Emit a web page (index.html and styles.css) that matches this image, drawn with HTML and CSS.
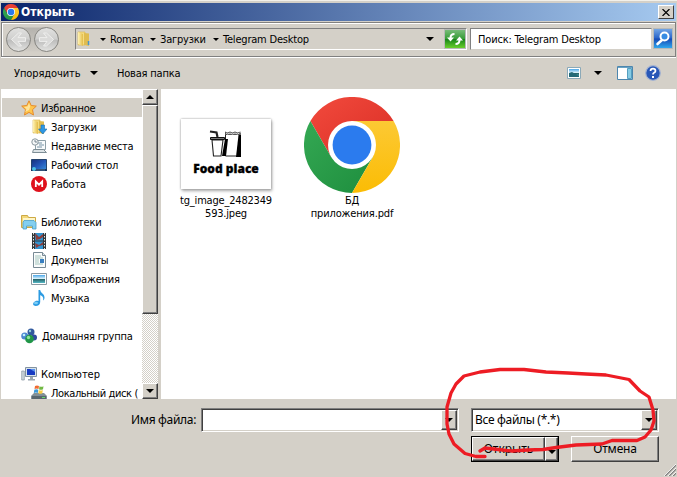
FILE: index.html
```
<!DOCTYPE html>
<html lang="ru">
<head>
<meta charset="utf-8">
<title>Открыть</title>
<link rel="stylesheet" href="styles.css">
</head>
<body>
<svg class="defs" width="0" height="0" aria-hidden="true">
  <defs>
    <linearGradient id="cr" x1="0" y1="0" x2="1" y2="1"><stop offset="0" stop-color="#f24a3d"/><stop offset="1" stop-color="#d92e25"/></linearGradient>
    <linearGradient id="cg" x1="0" y1="0" x2="1" y2="1"><stop offset="0" stop-color="#34a853"/><stop offset="1" stop-color="#1e8e3e"/></linearGradient>
    <linearGradient id="cy" x1="0" y1="0" x2="0" y2="1"><stop offset="0" stop-color="#fcc934"/><stop offset="1" stop-color="#fbbc04"/></linearGradient>
    <linearGradient id="fold" x1="0" x2="1"><stop offset="0" stop-color="#fff3b4"/><stop offset="1" stop-color="#e3bc48"/></linearGradient>
    <linearGradient id="nav" x1="0" y1="0" x2="0" y2="1"><stop offset="0" stop-color="#e2e2e0"/><stop offset=".48" stop-color="#cfcfce"/><stop offset=".52" stop-color="#bcbcbb"/><stop offset="1" stop-color="#e4e4e2"/></linearGradient>
    <linearGradient id="pill" x1="0" y1="0" x2="0" y2="1"><stop offset="0" stop-color="#b4b2ad"/><stop offset="1" stop-color="#d0ccc5"/></linearGradient>
    <linearGradient id="scr" x1="0" y1="0" x2="1" y2="1"><stop offset="0" stop-color="#172e78"/><stop offset=".5" stop-color="#2355b8"/><stop offset="1" stop-color="#3b94dd"/></linearGradient>
    <linearGradient id="sky" x1="0" y1="0" x2="0" y2="1"><stop offset="0" stop-color="#4aa6e8"/><stop offset=".45" stop-color="#d9f1fb"/><stop offset=".5" stop-color="#245c60"/><stop offset="1" stop-color="#56bac8"/></linearGradient>
    <symbol id="chrome" viewBox="0 0 96 96">
      <path fill="url(#cr)" d="M6.4 24A48 48 0 0 1 89.6 24H48L27.2 60Z"/>
      <path fill="url(#cg)" d="M6.4 24A48 48 0 0 0 48 96L68.8 60H27.2Z"/>
      <path fill="url(#cy)" d="M89.6 24A48 48 0 0 1 48 96L68.8 60L48 24Z"/>
      <circle cx="48" cy="48" r="24" fill="#fff"/><circle cx="48" cy="48" r="19.4" fill="#2b7bee"/>
    </symbol>
    <symbol id="folder" viewBox="0 0 16 16">
      <path d="M2 1h7v13H2z" fill="#f5dc82" stroke="#d6b14a" stroke-width=".6"/><path d="M8 2l5 .5V15l-5-1z" fill="#e0bc50"/><path d="M2 1l5 2v12l-5-2z" fill="url(#fold)"/>
    </symbol>
  </defs>
</svg>
<main class="dialog">
  <header class="titlebar">
    <svg class="i16" viewBox="0 0 16 16"><use href="#chrome"/></svg>
    <h1>Открыть</h1>
    <button class="close" aria-label="Закрыть"><svg width="8" height="7" viewBox="0 0 8 7"><path d="M.5 0L7.500 7M7.500 0L.5 7" stroke="#000" stroke-width="1.200"/></svg></button>
  </header>

  <section class="navbar">
    <svg class="history" width="56" height="28" viewBox="0 0 56 28">
      <path d="M12.500 1.500H40.500V25.500H12.500Z" fill="url(#pill)"/>
      <g fill="url(#nav)" stroke="#85847f"><circle cx="12.500" cy="13.500" r="12"/><circle cx="40.500" cy="13.500" r="12"/></g>
      <path d="M19.500 11.600H12L15.500 7H12.500L5.500 13.500L12.500 20H15.500L12 15.400H19.500ZM33.500 11.600H41L37.500 7H40.500L47.500 13.500L40.500 20H37.500L41 15.400H33.500Z" fill="#dadad9" stroke="#f1f1ef" stroke-width=".9"/>
    </svg>
    <div class="address">
      <svg class="i16 place" viewBox="0 0 16 16"><use href="#folder"/><path d="M12.500 10v4" stroke="#4995c8" stroke-width="1.500"/></svg>
      <i class="tri"></i><span class="c1">Roman</span><i class="tri"></i><span class="c2">Загрузки</span><i class="tri"></i><span class="c3">Telegram Desktop</span>
      <i class="tri last"></i>
      <button class="refresh" aria-label="Обновить"><svg width="20" height="18" viewBox="0 0 20 18"><path d="M9.500 4Q5.500 4 5.500 8M10.500 14Q14.500 14 14.500 10" stroke="#fff" stroke-width="2" fill="none"/><path d="M2 7.500H9L5.500 11.500ZM11 10.500H18L14.500 6.500Z" fill="#fff"/></svg></button>
    </div>
    <div class="search"><span>Поиск: Telegram Desktop</span></div>
    <button class="find" aria-label="Найти"><svg width="18" height="19" viewBox="0 0 18 19"><path d="M8 11L3.500 15" stroke="#fff" stroke-width="2.600" stroke-linecap="round"/><circle cx="10.500" cy="7.500" r="4" fill="#388ce3" stroke="#fff" stroke-width="2"/></svg></button>
  </section>

  <nav class="toolbar">
    <span class="organize">Упорядочить</span><i class="tri big"></i><span class="newdir">Новая папка</span>
    <svg class="view" width="14" height="12" viewBox="0 0 14 12"><path d="M.5.5h13v11H.5z" fill="#fff" stroke="#8ba9b8"/><path d="M2 2h10v8H2z" fill="url(#sky)"/><path d="M2 6l3-1 7 4v1H2z" fill="#246a78"/></svg>
    <i class="tri big views"></i>
    <svg class="pane" width="16" height="14" viewBox="0 0 16 14"><path d="M.5.5h15v13H.5z" fill="#fff" stroke="#4c86ae"/><path d="M1 1.500h14" stroke="#6aa3c4"/><path d="M10.500 2.500h4v10h-4z" fill="#86cbe4" stroke="#559fc0"/></svg>
    <svg class="help" width="16" height="16" viewBox="0 0 16 16"><circle cx="8" cy="8" r="7.300" fill="#2857b7" stroke="#a4b3d2" stroke-width="1.200"/><path d="M5.500 6Q5.500 3.600 8 3.600T10.500 6Q10.500 7 9 7.800Q8 8.300 8 9.600" fill="none" stroke="#fff" stroke-width="1.700"/><path d="M7 11h2v2H7z" fill="#fff"/></svg>
  </nav>

  <section class="content">
    <ul class="tree">
      <li class="root selected"><svg class="i16" viewBox="0 0 16 16"><path d="M8 .8L10.200 5.500L15.300 6.100L11.500 9.700L12.500 15L8 12.400L3.500 15L4.500 9.700L.7 6.100L5.800 5.500Z" fill="#ffc64b" stroke="#e58a2a"/><path d="M8 3L9.200 6.600L8 10L4 12L5.500 9L3 7L6.500 6.500Z" fill="#ffe49a"/></svg><span>Избранное</span></li>
      <li><svg class="i16" viewBox="0 0 16 16"><use href="#folder"/><path d="M10 6h3.500v4H16l-4.200 5L7.500 10H10z" fill="#2d98e5" stroke="#1c6cab" stroke-width=".6"/></svg><span>Загрузки</span></li>
      <li><svg class="i16" viewBox="0 0 16 16"><path d="M4.500 2.500h10v9h-10z" fill="#f8fbfc" stroke="#8fa0a8"/><path d="M6 5h5M8 7h5M6 9h5" stroke="#7792a5"/><path d="M2.500 11.500h10l3 3h-14z" fill="#dce3e6" stroke="#7e8e96"/><circle cx="4" cy="4" r="3.200" fill="#f4f7f8" stroke="#8b989f"/><path d="M4 2v2h2" fill="none" stroke="#596b76" stroke-width=".8"/></svg><span class="recent">Недавние места</span></li>
      <li><svg class="i16" viewBox="0 0 16 16"><path d="M.5 2.500h15v11H.5z" fill="url(#scr)" stroke="#26446d"/><path d="M0 12h16v2H0z" fill="#16345d"/><circle cx="3" cy="12" r="2" fill="#4bc0e4"/><path d="M5 13h9" stroke="#668cae" stroke-width=".7"/></svg><span>Рабочий стол</span></li>
      <li><svg class="i16" viewBox="0 0 16 16"><circle cx="8" cy="8" r="8" fill="#df111c"/><path d="M4.800 11V5.500L8 8.700L11.200 5.500V11" stroke="#fff" stroke-width="1.800" fill="none"/></svg><span>Работа</span></li>
      <li class="root gap"><svg class="i16" viewBox="0 0 16 16"><path d="M.5 1.500h6l1 2h7v10H.5z" fill="#f4d878" stroke="#cda944"/><path d="M2 4h12v3H2z" fill="#fff6c8"/><path d="M3 6.500h10l2 2V15h-3.500v-3h-6v3H2V8.500z" fill="#83cff0" stroke="#4b9fc9" stroke-width=".8"/></svg><span>Библиотеки</span></li>
      <li><svg class="i16" viewBox="0 0 16 16"><path d="M1 0h14v16H1z" fill="#323638"/><path d="M4 0h8v7.500H4zM4 8.500h8V16H4z" fill="#3194d1"/><path d="M4 0l4 4 4-3v3L9 6 5 7zM4 10l4 2 4-3v3l-4 1-3 2z" fill="#8c3e3c"/><path d="M2.500 0v16M13.500 0v16" stroke="#e3e7e9" stroke-dasharray="1.500 1.500"/></svg><span>Видео</span></li>
      <li><svg class="i16" viewBox="0 0 16 16"><path d="M2.500.5h9l3 3v12h-12z" fill="#fafcfc" stroke="#788a94"/><path d="M11.500.5v3h3" fill="#dce6eb" stroke="#788a94"/><path d="M4 4h6M4 6h8M4 8h4M4 10h4M4 12h8" stroke="#a3c4bc"/><path d="M9 7h4v4H9z" fill="#397fc1"/></svg><span>Документы</span></li>
      <li><svg class="i16" viewBox="0 0 16 16"><path d="M.5 2.500h15v11H.5z" fill="#fff" stroke="#8c9aa2"/><path d="M2 4h12v8H2z" fill="url(#sky)"/></svg><span>Изображения</span></li>
      <li><svg class="i16" viewBox="0 0 16 16"><path d="M7.500 0h1.700c.3 3 4.300 3.500 4.300 7.500 0 1.500-.7 2.500-1.500 3 1-3.500-1-4.500-2.800-5.500v7c0 2.500-2 4-4.500 4S1.500 14 2.800 12.300 6 10.300 7.500 11z" fill="#2c9be2"/><ellipse cx="5" cy="13" rx="2" ry="1.300" fill="#79cdf8"/></svg><span>Музыка</span></li>
      <li class="root gap home"><svg class="i16" viewBox="0 0 16 16"><circle cx="10" cy="4" r="3.500" fill="#31599e"/><circle cx="3.700" cy="8" r="3.500" fill="#4a86cf"/><circle cx="13" cy="9.500" r="3" fill="#304b9e"/><circle cx="8.500" cy="11" r="4.300" fill="#219648"/><circle cx="9" cy="3" r="1.200" fill="#92ced9"/><circle cx="3" cy="7" r="1.300" fill="#c1f1fa"/><circle cx="7.500" cy="9.500" r="1.700" fill="#8be598"/></svg><span>Домашняя группа</span></li>
      <li class="root gap"><svg class="i16" viewBox="0 0 16 16"><path d="M4.500 1.500h11v9h-11z" fill="#d6e2ec" stroke="#8292a0"/><path d="M6 3h8v6H6z" fill="#173bc2"/><path d="M9 3h5v3z" fill="#5892ed"/><path d="M9 11h3v2h2v1.500H7V13h2z" fill="#9ba8b2"/><path d="M.7 5h2.600v9H.7z" fill="#cbd5db" stroke="#8896a0" stroke-width=".7"/></svg><span class="computer">Компьютер</span></li>
      <li><svg class="i16" viewBox="0 0 16 16"><path d="M3 8h10l3 3v4H0v-4z" fill="#829097"/><path d="M1 11h14v3H1z" fill="#59676e"/><path d="M11 12h3v1h-3z" fill="#65dc68"/><path d="M4 1q2-1 4 0L7.500 4q-2-1-4 0z" fill="#f16a31"/><path d="M8.500 1.300q2 1 4 0L12 4.300q-2 1-4 0z" fill="#72b943"/><path d="M3.300 4.700q2-1 4 0L6.800 8q-2-1-4 0z" fill="#3b9ad9"/><path d="M7.800 5q2 1 4 0l-.5 3.300q-2 1-4 0z" fill="#f8cb43"/></svg><span class="disk">Локальный диск (</span></li>
    </ul>
    <div class="scroll"><b class="bevel arrow"><i class="tri up"></i></b><b class="bevel thumb"></b><b class="track"></b><b class="bevel arrow"><i class="tri down"></i></b></div>
    <div class="files">
      <figure class="file one">
        <div class="thumbnail">
          <svg width="36" height="28" viewBox="0 0 36 28"><path d="M17.500 3V26H32V3" fill="#fff" stroke="#222" stroke-width="1"/><path d="M17 3V1.500l2.500 1 2.500-1 2.500 1 2.500-1 2.500 1 3-1V5H17Z" fill="#555"/><path d="M18 3l1.500 1 2.500-1 2.500 1 2.500-1 2.500 1 2-1" fill="none" stroke="#fff" stroke-width=".8"/><path d="M30.500 5H33V27H28Z" fill="#000"/><path d="M17 9H20L18 26H14Z" fill="#000"/><path d="M4 10L5.500 26H13L15 10Z" fill="#fff" stroke="#222" stroke-width="1.100"/><path d="M2.500 7.500h14v2h-14z" fill="#777" stroke="#111"/><path d="M9.500 7L8.500 2.500L2 1.500" fill="none" stroke="#222" stroke-width="2.200"/></svg>
          <strong>Food place</strong>
        </div>
        <figcaption><span class="n1">tg_image_2482349</span><span class="n2">593.jpeg</span></figcaption>
      </figure>
      <figure class="file two">
        <svg class="biglogo" viewBox="0 0 96 96"><use href="#chrome"/></svg>
        <figcaption><span>БД</span><span class="n3">приложения.pdf</span></figcaption>
      </figure>
    </div>
  </section>

  <footer class="footer">
    <div class="line">
      <label>Имя файла:</label>
      <div class="combo name"><span></span><b class="bevel drop"><i class="tri big"></i></b></div>
      <div class="combo type"><span>Все файлы (*.*)</span><b class="bevel drop"><i class="tri big"></i></b></div>
    </div>
    <div class="line actions">
      <div class="open"><button class="bevel main">Открыть</button><button class="bevel split" aria-label="Ещё"><i class="tri big"></i></button></div>
      <button class="bevel cancel">Отмена</button>
    </div>
  </footer>
  <svg class="grip" width="12" height="12" viewBox="0 0 12 12"><path d="M1 12L12 1M5 12L12 5M9 12L12 9" stroke="#808080" stroke-width="1.500"/><path d="M0 12L12 0M4 12L12 4M8 12L12 8" stroke="#fff" stroke-width=".8"/></svg>
  <svg class="marker" width="677" height="477" viewBox="0 0 677 477"><path d="M485 456.500H476L465 453.500L454 444L449 434L447 424V407L451 393L456 384L464 376L480 372L500 369.500H524L546 372L568 373L586 374L606 375L629 379.500L640 391L649 397L653 410L654 421L651 430L645 437L637 440.500H612L602 444L576 445L556 447.500L543 449.500L528 450L512 451L498 449.500L485 448L480 451" fill="none" stroke="#ed1c24" stroke-width="3.300" stroke-linecap="round" stroke-linejoin="round"/></svg>
</main>
</body>
</html>
```
FILE: styles.css
```
* { box-sizing: border-box; }
html, body { margin: 0; width: 677px; height: 477px; overflow: hidden; }
body { font: 11px/13px "DejaVu Sans Condensed", "DejaVu Sans", sans-serif; font-stretch: condensed; letter-spacing: -.2px; color: #000; background: #d4d0c8; }
svg { display: block; flex: none; }
button { font: inherit; letter-spacing: inherit; color: inherit; padding: 0; margin: 0; border: 0; border-radius: 0; }
span, label { white-space: nowrap; }
.defs { position: absolute; }
.i16 { width: 16px; height: 16px; }

.dialog { position: relative; width: 677px; height: 477px; padding: 2px 1px 0; display: flex; flex-direction: column; border-top: 1px solid #f2f0ea; }
.titlebar { height: 18px; flex: none; display: flex; align-items: center; padding: 0 2px; background: linear-gradient(90deg, #0a246a, #a6caf0); color: #fff; }
.titlebar h1 { font: inherit; font-weight: bold; font-size: 12px; margin: 0 auto 0 2px; letter-spacing: .05px; }
.close { width: 16px; height: 14px; display: grid; place-items: center; background: #d4d0c8; border: 1px solid; border-color: #fff #404040 #404040 #fff; }

.navbar { height: 35px; margin-top: 1px; flex: none; display: flex; padding: 5px 0 0 4px; border: 1px solid #808080; box-shadow: inset 1px 1px #fff, 0 1px #fff; }
.history { margin-top: -2px; margin-right: 13px; }
.address { width: 392px; height: 22px; display: flex; align-items: center; border: 1px solid; border-color: #808080 #fff #fff #808080; }
.tri { width: 0; height: 0; flex: none; border: 3px solid transparent; border-top-color: #000; border-bottom: 0; }
.tri.big { border-width: 4px 4px 0; }
.place { margin-right: 8px; }
.address span { margin: 1px 0 0 4px; }
.c1 { width: 40px; }
.c2 { width: 53px; }
.address .last { margin-left: auto; border-width: 4px 4px 0; margin-right: 10px; }
.refresh, .find { display: grid; place-items: center; border: 1px solid #b7b9b8; }
.refresh { width: 22px; height: 20px; background: linear-gradient(#77bb78, #379d38 48%, #188619 52%, #69cf2b); }
.search { width: 182px; height: 22px; margin-left: 3px; padding: 4px 7px; letter-spacing: -.18px; background: #fff; border: 1px solid; border-color: #808080 #d4d0c8 #d4d0c8 #808080; }
.find { width: 20px; height: 21px; margin-left: 1px; background: linear-gradient(#72a5e5, #2864c9 48%, #1649b5 52%, #30a7ee); }

.toolbar { height: 32px; flex: none; display: flex; align-items: center; padding: 0 15px 0 13px; }
.toolbar .organize { width: 68px; letter-spacing: -.1px; }
.toolbar .big { margin-left: 8px; }
.newdir { margin: 0 auto 0 19px; }
.toolbar .views { margin: 0 15px 0 13px; }
.help { margin-left: 12px; }

.content { height: 310px; flex: none; display: flex; background: #fff; }
.tree { list-style: none; margin: 0; padding: 9px 0 0 1px; width: 141px; height: 310px; overflow: hidden; }
.tree li { height: 19px; display: flex; align-items: center; padding-left: 29px; }
.tree li span { margin: 1px 0 0 4px; }
.tree .home span { margin-left: 5px; letter-spacing: -.25px; }
.tree .computer { letter-spacing: -.05px; }
.tree .disk { letter-spacing: -.4px; }
.tree .root { padding-left: 19px; }
.tree .gap { margin-top: 19px; }
.selected { background: #d4d0c8; }
.scroll { width: 16px; display: flex; flex-direction: column; }
.bevel { display: grid; place-items: center; background: #d4d0c8; border: 1px solid; border-color: #fff #404040 #404040 #fff; box-shadow: inset -1px -1px #808080; }
.arrow { height: 16px; flex: none; }
.thumb { height: 209px; }
.track { flex: 1; background: repeating-conic-gradient(#fff 0 25%, #d4d0c8 0 50%) 0 0 / 2px 2px; }
.tri.up { border-width: 0 4px 4px; border-bottom: 4px solid #000; }
.tri.down { border-width: 4px 4px 0; }
.files { flex: 1; display: flex; align-items: flex-start; border-left: 3px solid #d4d0c8; padding: 8px 0 0 13px; }
.file { margin: 0; width: 104px; display: flex; flex-direction: column; align-items: center; text-align: center; }
.two { margin-left: 22px; }
.thumbnail { width: 90px; height: 70px; margin: 22px 0 4px; padding-top: 11px; display: flex; flex-direction: column; align-items: center; background: #fff; box-shadow: 0 0 2px #999, 1px 2px 3px #aaa; }
.thumbnail strong { font: 800 12px/14px "Open Sans", "Noto Sans", sans-serif; letter-spacing: 0; margin-top: 4px; -webkit-text-stroke: .3px #000; }
.biglogo { width: 96px; height: 96px; }
figcaption { display: flex; flex-direction: column; align-items: center; margin-top: 1px; }
.one figcaption { margin-top: 0; padding-top: 1px; }
.n3 { letter-spacing: -.15px; }

.footer { padding-top: 8px; display: flex; flex-direction: column; font: 12px/16px "Noto Sans", "Open Sans", sans-serif; letter-spacing: -.32px; }
.line { display: flex; align-items: center; height: 25px; }
.line label { margin-left: 130px; width: 70px; }
.combo { height: 24px; display: flex; padding: 1px; background: #fff; border: 1px solid; border-color: #808080 #fff #fff #808080; box-shadow: inset 1px 1px #404040, inset -1px -1px #d4d0c8; }
.combo span { flex: 1; padding: 2px; }
.name { width: 258px; }
.type { width: 188px; margin-left: 12px; }
.drop { width: 16px; height: 20px; }
.actions { margin-top: 4px; height: 26px; padding-left: 470px; }
.open { width: 88px; height: 26px; display: flex; border: 1px solid #000; }
.main { width: 73px; letter-spacing: 0; }
.split { width: 13px; padding-top: 5px; }
.cancel { width: 88px; height: 26px; margin-left: 12px; padding-bottom: 0; letter-spacing: -.2px; }
.grip { position: absolute; right: 1px; bottom: 1px; }
.marker { position: absolute; left: 0; top: -1px; pointer-events: none; }
```
